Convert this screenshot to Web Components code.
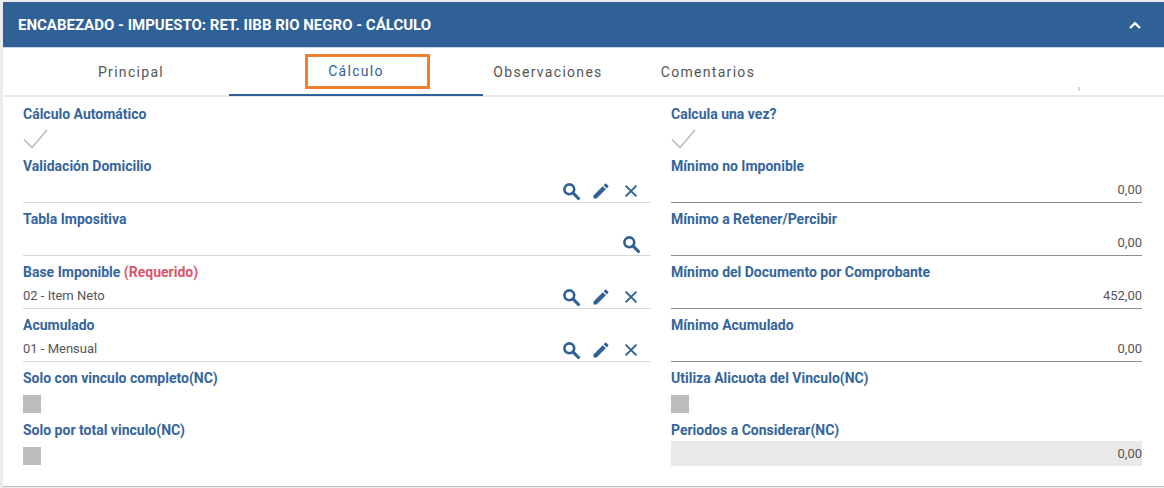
<!DOCTYPE html>
<html>
<head>
<meta charset="utf-8">
<style>
  html, body { margin: 0; height: 100%; background: #fff; }
  body { font-family: Roboto, "Liberation Sans", sans-serif; overflow: hidden; }
</style>
</head>
<body>
<tax-panel title="ENCABEZADO - IMPUESTO: RET. IIBB RIO NEGRO - CÁLCULO">
  <tab-bar></tab-bar>
  <div slot="left">
    <form-field label="Cálculo Automático" type="check" h="52"></form-field>
    <form-field label="Validación Domicilio" icons="search,edit,clear" h="53"></form-field>
    <form-field label="Tabla Impositiva" icons="search" h="53"></form-field>
    <form-field label="Base Imponible" required value="02 - Item Neto" icons="search,edit,clear" h="53"></form-field>
    <form-field label="Acumulado" value="01 - Mensual" icons="search,edit,clear" h="53"></form-field>
    <form-field label="Solo con vinculo completo(NC)" type="box" h="52"></form-field>
    <form-field label="Solo por total vinculo(NC)" type="box" h="52"></form-field>
  </div>
  <div slot="right">
    <form-field label="Calcula una vez?" type="check" h="52"></form-field>
    <form-field label="Mínimo no Imponible" value="0,00" number dark h="53"></form-field>
    <form-field label="Mínimo a Retener/Percibir" value="0,00" number dark h="53"></form-field>
    <form-field label="Mínimo del Documento por Comprobante" value="452,00" number dark h="53"></form-field>
    <form-field label="Mínimo Acumulado" value="0,00" number dark h="53"></form-field>
    <form-field label="Utiliza Alicuota del Vinculo(NC)" type="box" h="52"></form-field>
    <form-field label="Periodos a Considerar(NC)" value="0,00" number disabled h="52"></form-field>
  </div>
</tax-panel>

<script>
const ICONS = {
  search: '<circle cx="9.5" cy="9.5" r="5.6" fill="none" stroke="#2f6196" stroke-width="3"/><path d="M13.6 13.6 20 20" fill="none" stroke="#2f6196" stroke-width="3.6" stroke-linecap="round"/>',
  edit: '<path d="M3 17.25V21h3.75L17.81 9.94l-3.75-3.75L3 17.25zM20.71 7.04a1 1 0 0 0 0-1.41l-2.34-2.34a1 1 0 0 0-1.41 0l-1.83 1.83 3.75 3.75 1.83-1.83z"/>',
  clear: '<path d="M5.5 5.5 18.5 18.5M18.5 5.5 5.5 18.5" fill="none" stroke="#2f6196" stroke-width="2.3"/>'
};

class TaxPanel extends HTMLElement {
  constructor () {
    super();
    this.attachShadow({ mode: 'open' });
  }
  connectedCallback () {
    this.shadowRoot.innerHTML = `<style>
        :host {
          display: block;
          height: 488px;
          box-sizing: border-box;
          padding: 2px 0 1px 3px;
          background: #ececec;
        }
        .card {
          height: 100%;
          display: flex;
          flex-direction: column;
          background: #fff;
          border-bottom: 1px solid #bdbdbd;
          box-sizing: border-box;
        }
        .head {
          flex: none;
          height: 45px;
          display: flex;
          align-items: center;
          justify-content: space-between;
          padding: 0 22px 0 15px;
          background: #2f6196;
          color: #fff;
          font-size: 15px;
          font-weight: 700;
          border-bottom: 1px solid #c9d8e8;
          box-sizing: content-box;
        }
        .head svg { width: 14px; height: 10px; display: block; }
        .cols {
          display: grid;
          grid-template-columns: 628px 471px;
          column-gap: 20px;
          padding: 0 0 0 20px;
        }
      </style>
      <div class="card">
        <div class="head">
          <span>${this.getAttribute('title')}</span>
          <svg viewBox="0 0 14 10"><path d="M2 8 7 3.2 12 8" fill="none" stroke="#fff" stroke-width="2.4"/></svg>
        </div>
        <slot></slot>
        <div class="cols">
          <div><slot name="left"></slot></div>
          <div><slot name="right"></slot></div>
        </div>
      </div>`;
  }
}

class TabBar extends HTMLElement {
  constructor () {
    super();
    this.attachShadow({ mode: 'open' });
  }
  connectedCallback () {
    this.shadowRoot.innerHTML = `<style>
        :host {
          display: block;
          position: relative;
          height: 49px;
          border-bottom: 2px solid #e9e9e9;
          box-sizing: border-box;
        }
        .tabs {
          display: grid;
          grid-template-columns: 226px 254px 128px 192px;
          height: 48px;
        }
        .tab {
          display: flex;
          align-items: center;
          justify-content: center;
          height: 48px;
          box-sizing: border-box;
          padding: 0 0 1px 2px;
          font-size: 14px;
          letter-spacing: 1.3px;
          color: #555;
        }
        .tab:first-child { padding-left: 30px; }
        .active {
          padding-left: 0;
          color: #2f6196;
          border-bottom: 2px solid #2f6196;
        }
        .mark {
          position: absolute;
          left: 302px;
          top: 6px;
          width: 125px;
          height: 35px;
          box-sizing: border-box;
          border: 3px solid #f08030;
        }
        .tick {
          position: absolute;
          left: 1075px;
          top: 39px;
          width: 2px;
          height: 4px;
          background: #d4d4d4;
        }
      </style>
      <div class="tabs">
        <div class="tab">Principal</div>
        <div class="tab active">Cálculo</div>
        <div class="tab">Observaciones</div>
        <div class="tab">Comentarios</div>
      </div>
      <div class="mark"></div>
      <div class="tick"></div>`;
  }
}

class FormField extends HTMLElement {
  constructor () {
    super();
    this.attachShadow({ mode: 'open' });
  }
  get control () {
    const type = this.getAttribute('type');
    if (type === 'check') {
      return `<svg class="check" width="26" height="20" viewBox="0 0 26 20"><path d="M1 10.5 9 18.5 24 1" fill="none" stroke="#bdbdbd" stroke-width="1.6"/></svg>`;
    }
    if (type === 'box') {
      return `<div class="box"></div>`;
    }
    const icons = (this.getAttribute('icons') || '').split(',').filter(Boolean)
      .map(name => `<svg class="ico ${name}" viewBox="0 0 24 24">${ICONS[name]}</svg>`).join('');
    const cls = ['input'];
    if (this.hasAttribute('number')) cls.push('number');
    if (this.hasAttribute('dark')) cls.push('dark');
    if (this.hasAttribute('disabled')) cls.push('disabled');
    return `<div class="${cls.join(' ')}">
        <span class="value">${this.getAttribute('value') || ''}</span>
        <span class="icons">${icons}</span>
      </div>`;
  }
  connectedCallback () {
    const req = this.hasAttribute('required') ? ' <span class="req">(Requerido)</span>' : '';
    this.shadowRoot.innerHTML = `<style>
        :host {
          display: flow-root;
          height: ${this.getAttribute('h')}px;
        }
        .label {
          height: 18px;
          margin-top: 8px;
          line-height: 18px;
          font-size: 14px;
          font-weight: 700;
          color: #34659c;
          white-space: nowrap;
        }
        .req { color: #d9566a; }
        .input {
          display: flex;
          align-items: center;
          justify-content: space-between;
          height: 28px;
          padding-top: 6px;
          box-sizing: border-box;
          font-size: 13px;
          color: #555;
          border-bottom: 1px solid #d8d8d8;
        }
        .value { margin-top: -4px; }
        .dark { border-bottom-color: #8c8c8c; }
        .number { justify-content: flex-end; }
        .number .icons { display: none; }
        .disabled {
          height: 25px;
          margin-top: 2px;
          padding-top: 0;
          background: #e9e9e9;
          border-bottom: 0;
        }
        .disabled .value { margin-top: 0; }
        .icons { display: flex; margin-right: 10px; gap: 10px; }
        .ico { width: 20px; height: 20px; fill: #2f6196; display: block; }
        .ico.search { width: 21px; height: 21px; margin: 0 -1px 0 0; }
        .check { display: block; margin-top: 6px; }
        .box { width: 18px; height: 18px; margin-top: 8px; background: #bdbdbd; }
      </style>
      <div class="label">${this.getAttribute('label')}${req}</div>
      ${this.control}`;
  }
}

window.customElements.define('tax-panel', TaxPanel);
window.customElements.define('tab-bar', TabBar);
window.customElements.define('form-field', FormField);
</script>
</body>
</html>
